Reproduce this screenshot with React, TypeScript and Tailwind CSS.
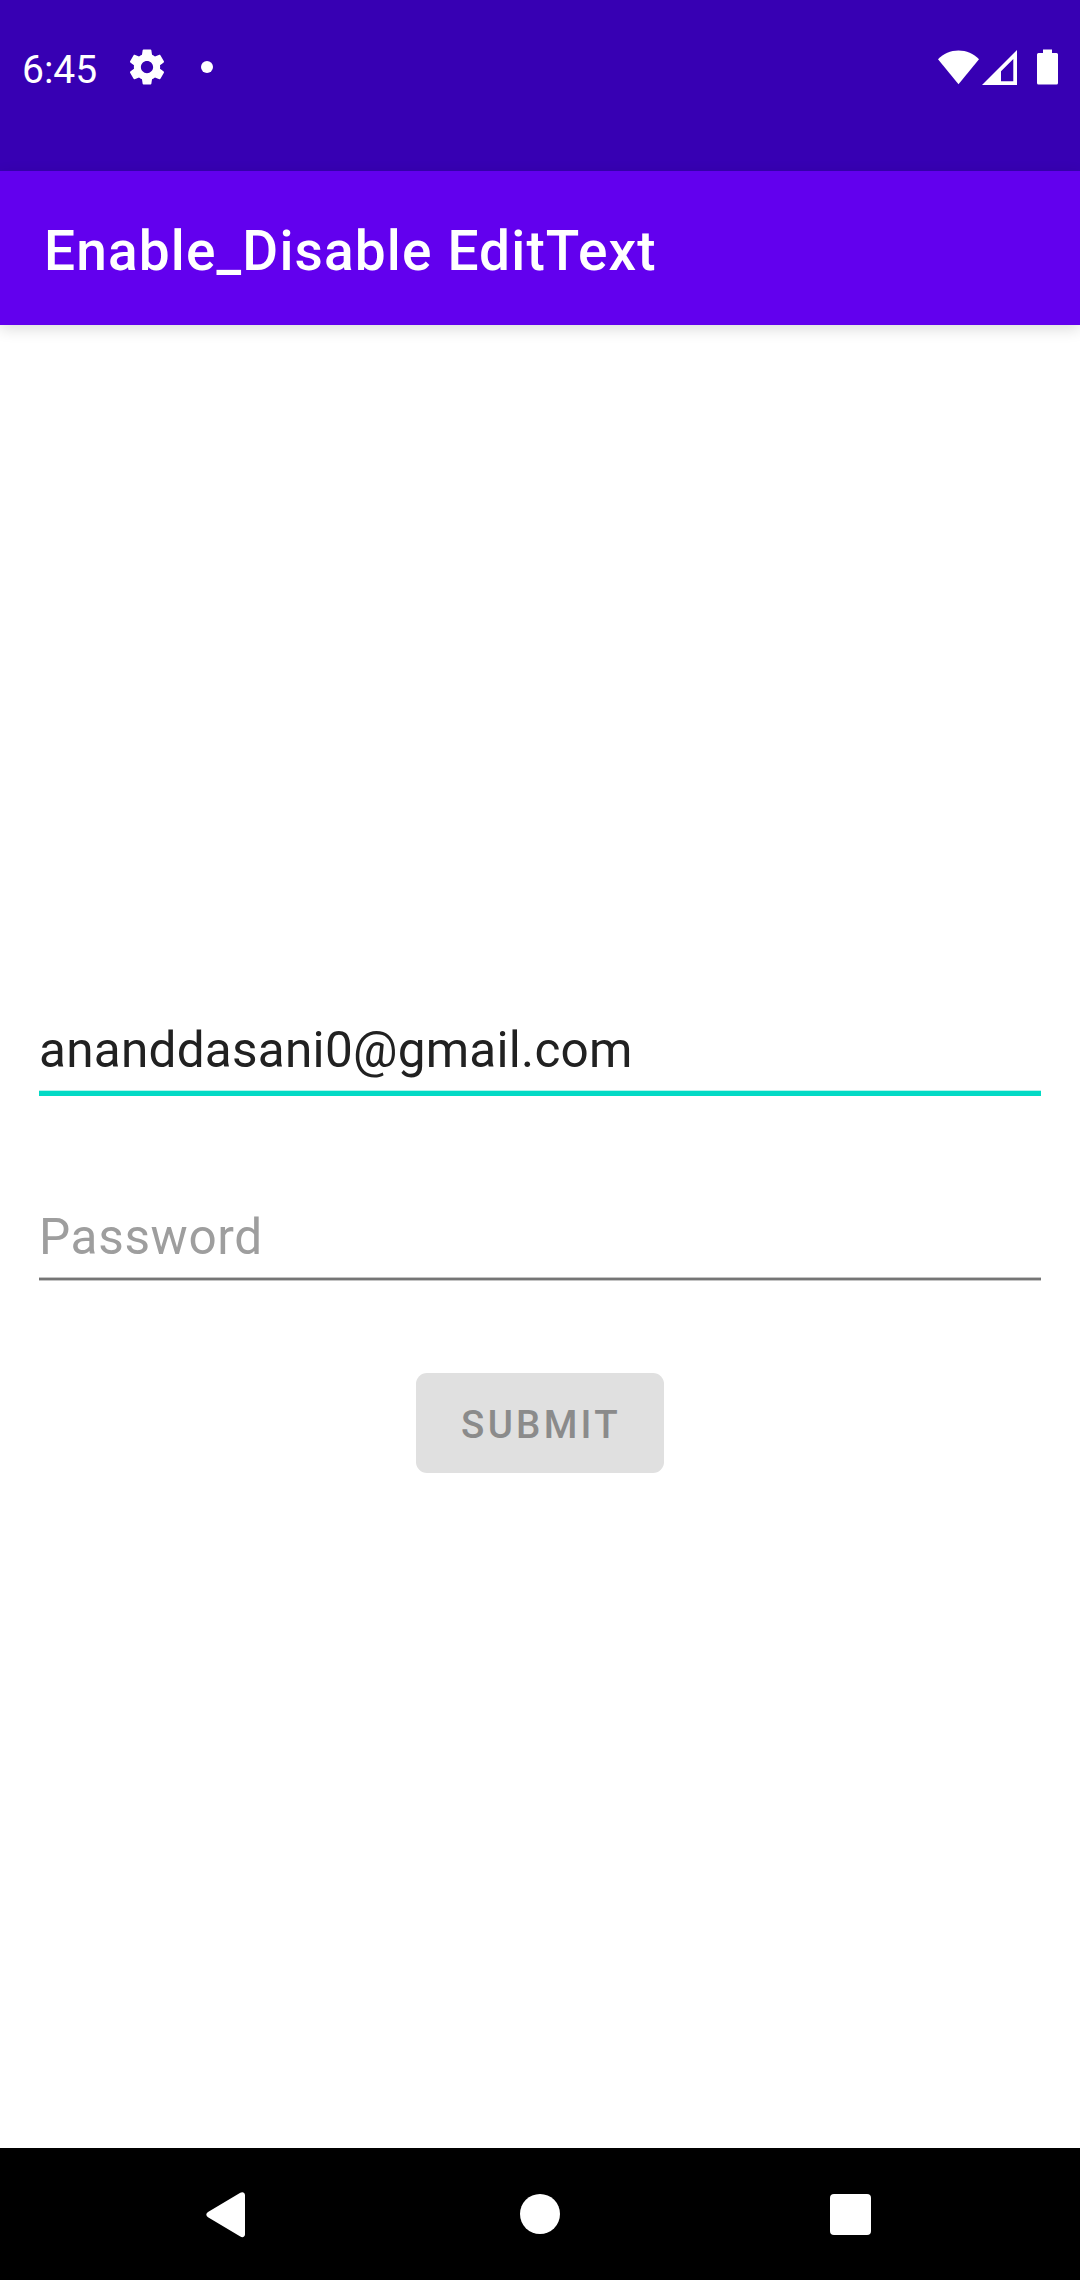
import React from "react";

function StatusBar() {
  return (
    <header className="flex h-[171px] items-start justify-between bg-[#3700b3] pl-[22px] pr-[22px] pt-[46px]">
      <div className="flex h-[42px] items-center text-white">
        <span className="relative top-[3px] w-[103.5px] text-[39px] leading-[42px]">6:45</span>
        <svg className="h-[42px] w-[42px]" viewBox="0 0 24 24" fill="currentColor">
          <path d="M19.43 12.98c.04-.32.07-.64.07-.98s-.03-.66-.07-.98l2.11-1.65c.19-.15.24-.42.12-.64l-2-3.46c-.12-.22-.39-.3-.61-.22l-2.49 1c-.52-.4-1.08-.73-1.69-.98l-.38-2.65C14.46 2.18 14.25 2 14 2h-4c-.25 0-.46.18-.49.42l-.38 2.65c-.61.25-1.17.59-1.69.98l-2.49-1c-.23-.09-.49 0-.61.22l-2 3.46c-.13.22-.07.49.12.64l2.11 1.65c-.04.32-.07.65-.07.98s.03.66.07.98l-2.11 1.65c-.19.15-.24.42-.12.64l2 3.46c.12.22.39.3.61.22l2.49-1c.52.4 1.08.73 1.69.98l.38 2.65c.03.24.24.42.49.42h4c.25 0 .46-.18.49-.42l.38-2.65c.61-.25 1.17-.59 1.69-.98l2.49 1c.23.09.49 0 .61-.22l2-3.46c.12-.22.07-.49-.12-.64l-2.11-1.65zM12 15.5c-1.93 0-3.5-1.57-3.5-3.5s1.57-3.5 3.5-3.5 3.5 1.57 3.5 3.5-1.57 3.5-3.5 3.5z" />
        </svg>
        <span className="ml-[33.5px] h-3 w-3 rounded-full bg-white" />
      </div>
      <div className="flex items-start pt-[3px] text-white">
        <svg className="mt-px h-[35px] w-[41px]" viewBox="0 0 41 35" fill="currentColor">
          <path d="M20.5 34.3L0 9.3C5.500 3.800 12.500 0.500 20.500 0.500S35.500 3.800 41 9.300Z" />
        </svg>
        <svg className="ml-[3px] mt-px h-[36px] w-[35px]" viewBox="0 0 35 36" fill="currentColor">
          <path fillRule="evenodd" d="M35 0V35H0ZM31.300 9L19 21.300V31.300H31.300Z" />
        </svg>
        <svg className="ml-[20px] h-[36px] w-[21px]" viewBox="0 0 21 36" fill="currentColor">
          <path d="M6 0.500H15V4H19.500Q21 4 21 5.500V34Q21 35.500 19.500 35.500H1.500Q0 35.500 0 34V5.500Q0 4 1.500 4H6Z" />
        </svg>
      </div>
    </header>
  );
}

function NavigationBar() {
  return (
    <nav className="flex h-[132px] items-start bg-black pl-[206px] pt-[44px] text-white">
      <svg className="h-[46px] w-[39px]" viewBox="0 0 39 46" fill="currentColor">
        <path d="M34.300 0.700Q35.800 -0.100 37.400 0.400Q39 1.100 39 3V42.600Q39 44.500 37.400 45.100Q35.800 45.500 34.300 44.500L2 25.300Q0.300 24.300 0.300 22.600Q0.300 21 2 20Z" />
      </svg>
      <span className="ml-[275px] mt-[2px] h-10 w-10 rounded-full bg-white" />
      <span className="ml-[270px] mt-[2px] h-[41.25px] w-[41.25px] rounded-[4px] bg-white" />
    </nav>
  );
}

export default function App() {
  return (
    <div className="flex h-[2280px] w-[1080px] flex-col bg-white font-['Roboto',sans-serif]">
      <StatusBar />
      <div className="z-10 flex h-[154px] items-center bg-[#6200ee] pl-[44px] pt-[6px] shadow-[0_4px_14px_rgba(0,0,0,0.14)]">
        <h1 className="text-[55px] font-medium leading-[64px] tracking-[1.14px] text-white">Enable_Disable EditText</h1>
      </div>
      <main className="flex flex-1 flex-col items-center pt-[695px]">
        <div className="flex h-[76px] w-[1002px] flex-col justify-between text-[49.5px] leading-[60px] tracking-[0.25px] text-[#212121]">
          <span>ananddasani0@gmail.com</span>
          <div className="h-[6px] border-t border-[#b3f4ec] bg-[#03dac5]" />
        </div>
        <div className="mt-[111px] flex h-[74px] w-[1002px] flex-col justify-between text-[49.5px] leading-[60px] tracking-[0.65px] text-[#9e9e9e]">
          <span>Password</span>
          <div className="h-[4px] border-y border-[#c4c4c4] bg-[#757575]" />
        </div>
        <button disabled className="mt-[92px] h-[100px] w-[248px] rounded-[11px] bg-[#e0e0e0] pl-[2px] pt-[3px] text-[38.5px] font-medium leading-[45px] tracking-[3.25px] text-[#8b8b8b]">
          SUBMIT
        </button>
      </main>
      <NavigationBar />
    </div>
  );
}
